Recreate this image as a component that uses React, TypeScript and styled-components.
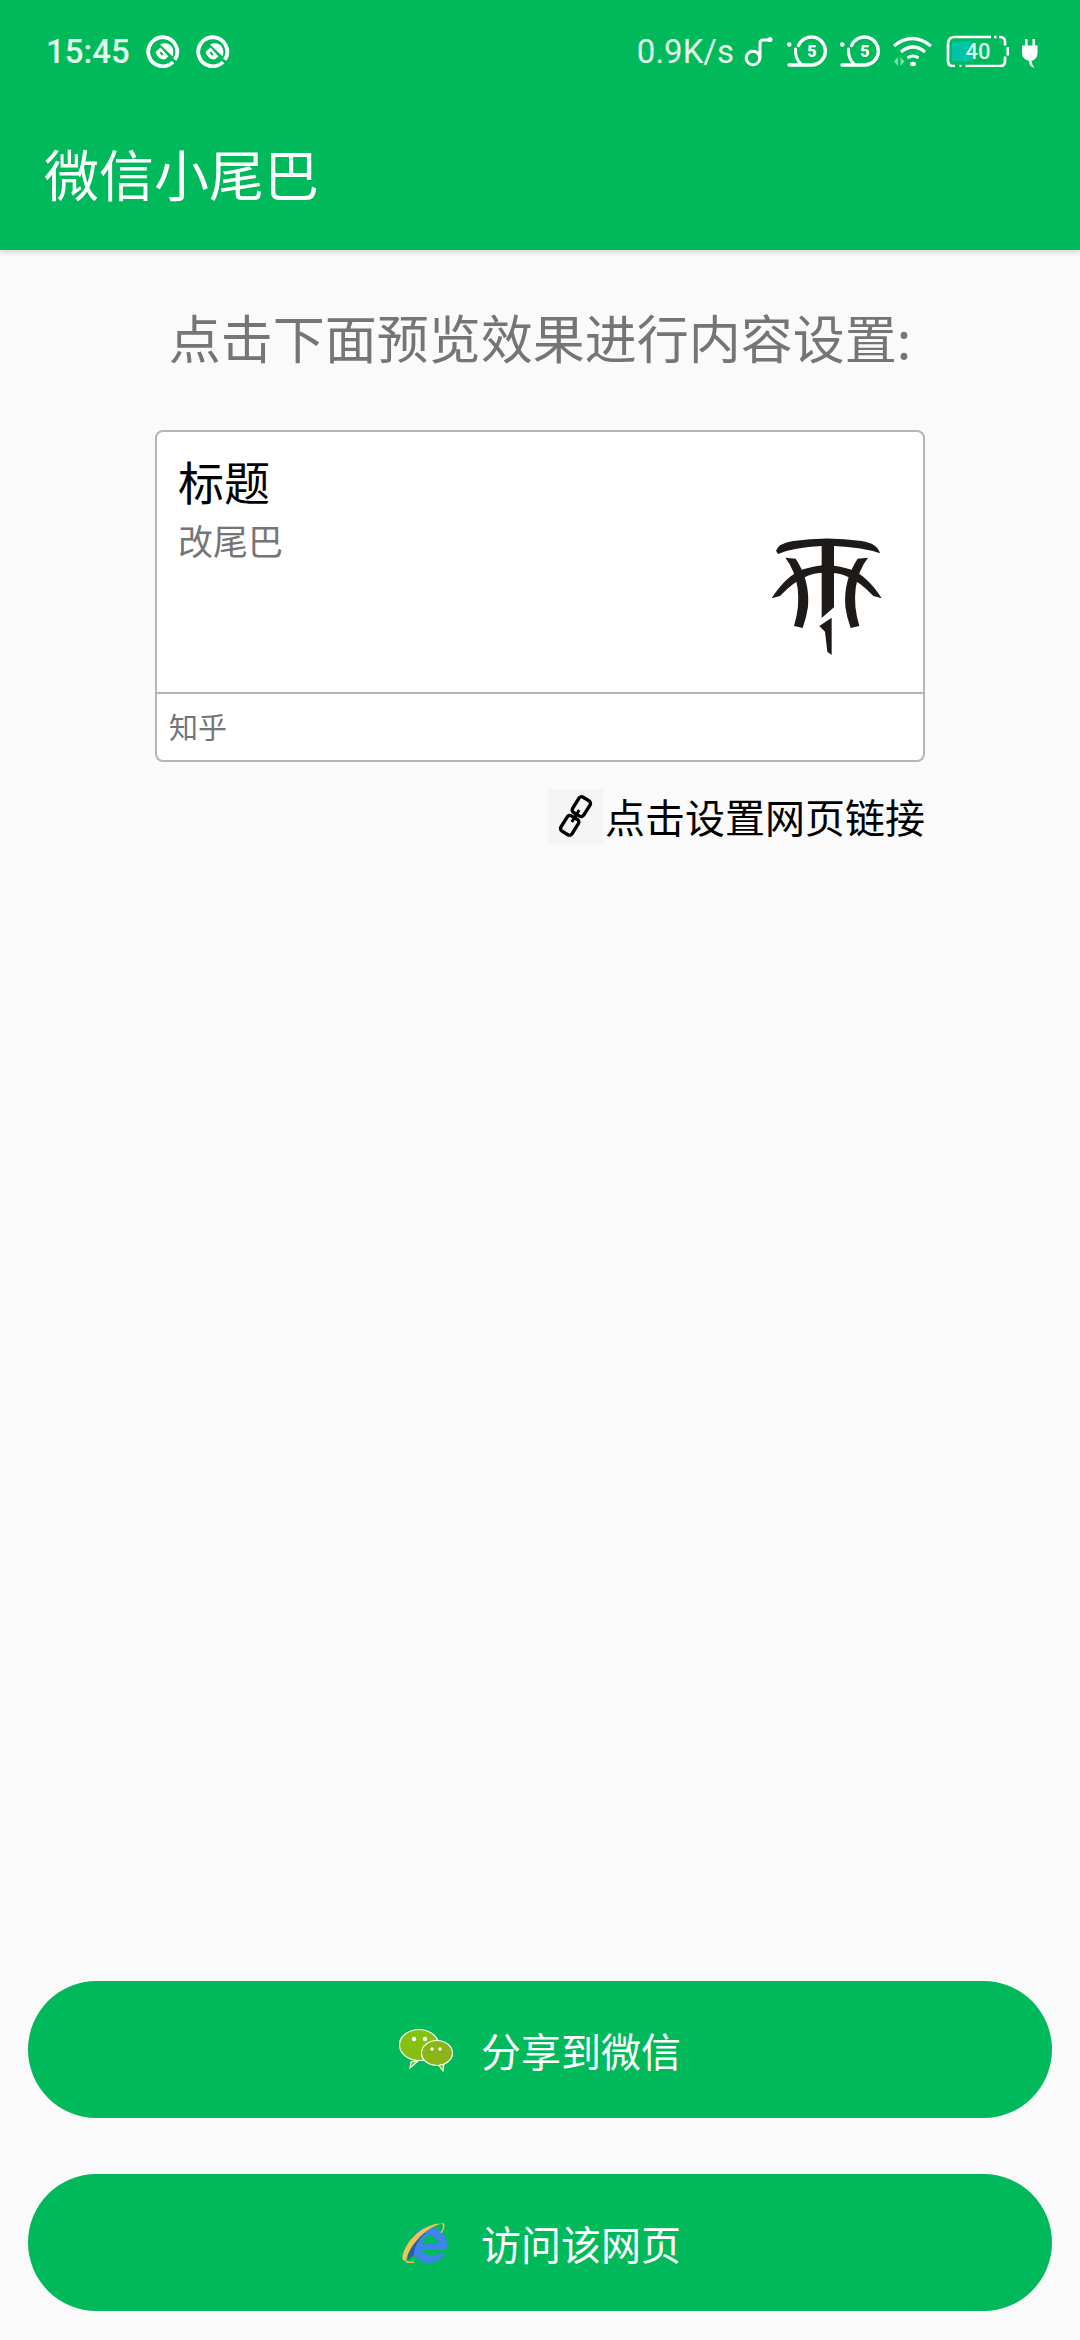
import React from "react";
import styled, { createGlobalStyle } from "styled-components";

const GREEN = "#00b95a";

const Global = createGlobalStyle`
  html, body { margin: 0; padding: 0; background: #fafafa; }
  body { font-family: "Noto Sans CJK SC", "Noto Sans", sans-serif; }
  * { box-sizing: border-box; }
`;

const Page = styled.div`
  width: 1080px;
  height: 2340px;
  display: flex;
  flex-direction: column;
  background: #fafafa;
  overflow: hidden;
`;

const AppBar = styled.header`
  height: 250px;
  background: ${GREEN};
  color: #fff;
  box-shadow: 0 2px 6px rgba(0, 0, 0, 0.16);
  display: flex;
  flex-direction: column;
  flex: none;
`;

const StatusBar = styled.div`
  height: 102px;
  padding: 0 42px 0 46px;
  display: flex;
  align-items: center;
  justify-content: space-between;
  flex: none;
`;

const StatusGroup = styled.div<{ $gap: number }>`
  display: flex;
  align-items: center;
  gap: ${(p) => p.$gap}px;
`;

const Time = styled.span`
  font-family: Roboto, sans-serif;
  font-weight: 500;
  font-size: 33px;
  line-height: 1;
  color: #e2f9ec;
`;

const Speed = styled.span`
  font-family: Roboto, sans-serif;
  font-size: 33px;
  line-height: 1;
  color: #e2f9ec;
  margin-right: -3px;
`;

const Title = styled.h1`
  margin: 0;
  padding: 0 0 0 44px;
  flex: 1;
  font-size: 55px;
  font-weight: 400;
  line-height: 140px;
`;

const Main = styled.main`
  flex: 1;
  display: flex;
  flex-direction: column;
  align-items: center;
  padding-top: 57px;
`;

const Heading = styled.p`
  margin: 0;
  height: 60px;
  line-height: 60px;
  font-size: 52px;
  color: #757575;
  white-space: nowrap;
`;

const Card = styled.section`
  width: 770px;
  height: 332px;
  margin-top: 63px;
  background: #fff;
  border: 2px solid #b5b5b5;
  border-radius: 8px;
  display: flex;
  flex-direction: column;
`;

const CardBody = styled.div`
  flex: 1;
  padding: 17px 13px 0 21px;
  display: flex;
  justify-content: space-between;
  border-bottom: 2px solid #b5b5b5;
`;

const CardTitle = styled.div`
  font-size: 46px;
  line-height: 62px;
  color: #000;
`;

const CardSub = styled.div`
  margin-top: 7px;
  font-size: 35px;
  line-height: 44px;
  color: #757575;
`;

const Logo = styled.svg`
  width: 160px;
  height: 150px;
  margin-top: 71px;
  flex: none;
`;

const CardFooter = styled.div`
  height: 66px;
  padding-left: 12px;
  font-size: 29px;
  line-height: 64px;
  color: #757575;
`;

const LinkRow = styled.div`
  width: 770px;
  margin-top: 27px;
  display: flex;
  justify-content: flex-end;
  align-items: center;
`;

const LinkIconBox = styled.span`
  width: 55px;
  height: 55px;
  background: #f5f5f5;
  display: flex;
  flex: none;
`;

const LinkText = styled.span`
  font-size: 40px;
  line-height: 55px;
  color: #000;
  margin-left: 2px;
`;

const Actions = styled.div`
  margin-top: auto;
  padding: 0 28px 29px;
  align-self: stretch;
  display: flex;
  flex-direction: column;
  gap: 56px;
`;

const ActionButton = styled.button`
  height: 137px;
  border: 0;
  border-radius: 69px;
  background: ${GREEN};
  color: #fff;
  font-family: inherit;
  font-size: 40px;
  display: flex;
  align-items: center;
  justify-content: center;
  gap: 28px;
`;

const ActionIcon = styled.svg`
  width: 54px;
  height: 46px;
  flex: none;
`;

const QIcon = () => (
  <svg width="34" height="34" viewBox="0 0 34 34">
    <path d="M27 28A14.500 14.500 0 1 1 28.800 25.800" fill="none" stroke="#fff" strokeWidth="3.800" />
    <path d="M14 10.500Q20 7.500 25 11.500Q28.500 16 26.800 22.500Z" fill="#fff" />
    <path d="M9.500 18L14.500 13.500L22.500 22.500L18.500 25.500Q12 25.500 9.500 18Z" fill="#fff" />
    <path d="M13.500 19L15 17.500L17.500 20.500L16 21.800Z" fill={GREEN} />
  </svg>
);

const Music = () => (
  <svg width="30" height="34" viewBox="0 0 30 34">
    <circle cx="9" cy="24" r="6.800" fill="none" stroke="#fff" strokeWidth="3" />
    <path d="M16 24V9Q16 6 19 6H26" fill="none" stroke="#fff" strokeWidth="3" strokeLinecap="round" />
    <circle cx="26" cy="5.500" r="2.500" fill="#fff" />
  </svg>
);

const Snail = () => (
  <svg width="40" height="34" viewBox="0 0 40 34">
    <circle cx="2.300" cy="10.500" r="2.300" fill="#fff" />
    <path d="M11.500 11.500A14 14 0 1 1 25 31H2" fill="none" stroke="#fff" strokeWidth="3.300" strokeLinecap="round" />
    <path d="M8.500 15Q8 25 14 30" fill="none" stroke="#fff" strokeWidth="3" strokeLinecap="round" />
    <text x="25" y="23.200" fontFamily="Roboto, sans-serif" fontSize="16" fontWeight="900" textAnchor="middle" fill="#fff">5</text>
  </svg>
);

const Wifi = () => (
  <svg width="40" height="32" viewBox="0 0 40 32">
    <path d="M1 11Q19 -4 38 11" fill="none" stroke="#fff" strokeWidth="3.200" />
    <path d="M8 17Q20 7 32 17" fill="none" stroke="#fff" strokeWidth="3.200" />
    <path d="M14.500 23Q20 19 25.500 23" fill="none" stroke="#fff" strokeWidth="3" />
    <ellipse cx="20" cy="29" rx="3" ry="2.200" fill="#fff" />
    <path d="M5 22v9l-4-4.500ZM7.500 31v-9l4 4.500Z" fill="#fff" fillOpacity="0.5" />
  </svg>
);

const Battery = () => (
  <svg width="63" height="32" viewBox="0 0 63 32">
    <rect x="6" y="6.500" width="20" height="20" rx="2.500" fill="#00c4a7" />
    <path d="M9 2H45M48 2h2.500M53 2H54Q59 2 59 7V10.500M59 21.500V26Q59 31 54 31H19.500M15.500 31h-2M9 31H7Q2 31 2 26V9Q2 2 9 2" fill="none" stroke="#fff" strokeWidth="2.700" />
    <rect x="60.500" y="12" width="2.500" height="8.500" fill="#fff" />
    <text x="32" y="24" fontFamily="Roboto, sans-serif" fontSize="22" fontWeight="500" textAnchor="middle" fill="#d8f8ea">40</text>
  </svg>
);

const Plug = () => (
  <svg width="16" height="34" viewBox="0 0 16 34">
    <path d="M3 5h2.500v6.500h5V5H13v6.500h2.500V19q0 6-6 8q.5 4 3 6.500h-1.500q-4-2-4-6.500q-7-2-7-8V11.500H3Z" fill="#fff" />
  </svg>
);

const sidePaths = (
  <>
    <path d="M65 235Q110 165 160 148Q190 139 217 136V158Q185 160 172 168Q130 185 90 228Z" />
    <path d="M106 113L137 116Q180 180 174 260Q170 290 158 324L132 318Q150 260 143 205Q135 150 106 113Z" />
  </>
);

const LogoMark = () => (
  <Logo viewBox="0 0 480 450">
    <g fill="#1e1a18">
      <path d="M78 92Q85 70 130 63Q230 48 335 63Q382 70 390 100Q340 82 252 78V262L215 294V78Q130 82 84 102Z" />
      <path d="M208 318L245 293V405L232 395L225 335Z" />
      {sidePaths}
      <g transform="matrix(-1 0 0 1 460 0)">{sidePaths}</g>
    </g>
  </Logo>
);

const ChainIcon = () => (
  <svg width="55" height="55" viewBox="-27.500 -27.500 55 55">
    <g fill="none" stroke="#000" strokeWidth="3.400" transform="translate(0 -0.500) rotate(32)">
      <rect x="-6.500" y="-20" width="13" height="18" rx="3" />
      <rect x="-6.500" y="2" width="13" height="18" rx="3" />
      <path d="M0 -7V7" strokeWidth="3" />
    </g>
  </svg>
);

const WeChatIcon = () => (
  <ActionIcon viewBox="0 0 54 46">
    <path d="M12 35L11 41L19 34Z" fill="#86c10f" stroke="#fff" strokeWidth="1.200" />
    <ellipse cx="20" cy="18" rx="19.500" ry="15.500" fill="#86c10f" stroke="#fff" strokeWidth="1.200" />
    <path d="M38 36L44 44L45 35Z" fill="#8ab518" stroke="#fff" strokeWidth="1.200" />
    <ellipse cx="38" cy="26" rx="15.500" ry="12.500" fill="#8ab518" stroke="#fff" strokeWidth="1.200" />
    <g fill="#fff">
      <circle cx="15" cy="12" r="2.200" />
      <circle cx="26" cy="12" r="2.200" />
      <circle cx="33" cy="22" r="1.700" />
      <circle cx="41" cy="22" r="1.700" />
    </g>
  </ActionIcon>
);

const IEIcon = () => (
  <ActionIcon viewBox="0 0 54 46">
    <circle cx="30" cy="25" r="18" fill="#3d86e8" />
    <path d="M22 12C14 18 9 28 9 40L15 35C15 28 19 19 27 13Z" fill="#2a5fa8" />
    <path d="M23 23.500Q24 16 31 16Q38 16 39 23.500Z" fill={GREEN} />
    <path d="M22.500 29.500H49V33.500H40Q36 36 31 35.500Q25 34.500 22.500 29.500Z" fill={GREEN} />
    <path d="M43 3.500C30 2 8 16 3.500 36C3 39 4 41 7 41.500C8 30 24 8 43 3.500Z" fill="#f0c24f" />
    <path d="M43 3.500C46 4 45 9 42 13" fill="none" stroke="#f0c24f" strokeWidth="1.400" />
    <path d="M7 41.500Q10 43 15 42" fill="none" stroke="#f0c24f" strokeWidth="1.400" />
  </ActionIcon>
);

export default function App() {
  return (
    <Page>
      <Global />
      <AppBar>
        <StatusBar>
          <StatusGroup $gap={16}>
            <Time>15:45</Time>
            <QIcon />
            <QIcon />
          </StatusGroup>
          <StatusGroup $gap={13}>
            <Speed>0.9K/s</Speed>
            <Music />
            <Snail />
            <Snail />
            <Wifi />
            <Battery />
            <Plug />
          </StatusGroup>
        </StatusBar>
        <Title>微信小尾巴</Title>
      </AppBar>
      <Main>
        <Heading>点击下面预览效果进行内容设置:</Heading>
        <Card>
          <CardBody>
            <div>
              <CardTitle>标题</CardTitle>
              <CardSub>改尾巴</CardSub>
            </div>
            <LogoMark />
          </CardBody>
          <CardFooter>知乎</CardFooter>
        </Card>
        <LinkRow>
          <LinkIconBox>
            <ChainIcon />
          </LinkIconBox>
          <LinkText>点击设置网页链接</LinkText>
        </LinkRow>
        <Actions>
          <ActionButton>
            <WeChatIcon />
            分享到微信
          </ActionButton>
          <ActionButton>
            <IEIcon />
            访问该网页
          </ActionButton>
        </Actions>
      </Main>
    </Page>
  );
}
